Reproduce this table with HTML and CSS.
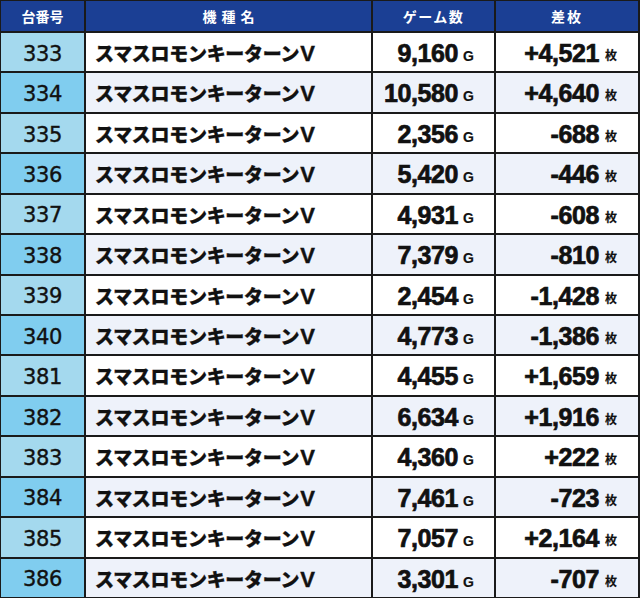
FILE: index.html
```html
<!DOCTYPE html>
<html lang="ja">
<head>
<meta charset="utf-8">
<title>台番号データ</title>
<link rel="stylesheet" href="styles.css">
</head>
<body>
<div class="board">
  <div class="row head">
    <div class="cell h1">台番号</div>
    <div class="cell h2">機種名</div>
    <div class="cell h3">ゲーム数</div>
    <div class="cell h4">差枚</div>
  </div>
  <div class="row odd"><div class="cell no">333</div><div class="cell name">スマスロモンキーターン<span class="v">V</span></div><div class="cell num">9,160<span class="u">G</span></div><div class="cell num diff">+4,521<span class="u2">枚</span></div></div>
  <div class="row even"><div class="cell no">334</div><div class="cell name">スマスロモンキーターン<span class="v">V</span></div><div class="cell num">10,580<span class="u">G</span></div><div class="cell num diff">+4,640<span class="u2">枚</span></div></div>
  <div class="row odd"><div class="cell no">335</div><div class="cell name">スマスロモンキーターン<span class="v">V</span></div><div class="cell num">2,356<span class="u">G</span></div><div class="cell num diff">-688<span class="u2">枚</span></div></div>
  <div class="row even"><div class="cell no">336</div><div class="cell name">スマスロモンキーターン<span class="v">V</span></div><div class="cell num">5,420<span class="u">G</span></div><div class="cell num diff">-446<span class="u2">枚</span></div></div>
  <div class="row odd"><div class="cell no">337</div><div class="cell name">スマスロモンキーターン<span class="v">V</span></div><div class="cell num">4,931<span class="u">G</span></div><div class="cell num diff">-608<span class="u2">枚</span></div></div>
  <div class="row even"><div class="cell no">338</div><div class="cell name">スマスロモンキーターン<span class="v">V</span></div><div class="cell num">7,379<span class="u">G</span></div><div class="cell num diff">-810<span class="u2">枚</span></div></div>
  <div class="row odd"><div class="cell no">339</div><div class="cell name">スマスロモンキーターン<span class="v">V</span></div><div class="cell num">2,454<span class="u">G</span></div><div class="cell num diff">-1,428<span class="u2">枚</span></div></div>
  <div class="row even"><div class="cell no">340</div><div class="cell name">スマスロモンキーターン<span class="v">V</span></div><div class="cell num">4,773<span class="u">G</span></div><div class="cell num diff">-1,386<span class="u2">枚</span></div></div>
  <div class="row odd"><div class="cell no">381</div><div class="cell name">スマスロモンキーターン<span class="v">V</span></div><div class="cell num">4,455<span class="u">G</span></div><div class="cell num diff">+1,659<span class="u2">枚</span></div></div>
  <div class="row even"><div class="cell no">382</div><div class="cell name">スマスロモンキーターン<span class="v">V</span></div><div class="cell num">6,634<span class="u">G</span></div><div class="cell num diff">+1,916<span class="u2">枚</span></div></div>
  <div class="row odd"><div class="cell no">383</div><div class="cell name">スマスロモンキーターン<span class="v">V</span></div><div class="cell num">4,360<span class="u">G</span></div><div class="cell num diff">+222<span class="u2">枚</span></div></div>
  <div class="row even"><div class="cell no">384</div><div class="cell name">スマスロモンキーターン<span class="v">V</span></div><div class="cell num">7,461<span class="u">G</span></div><div class="cell num diff">-723<span class="u2">枚</span></div></div>
  <div class="row odd"><div class="cell no">385</div><div class="cell name">スマスロモンキーターン<span class="v">V</span></div><div class="cell num">7,057<span class="u">G</span></div><div class="cell num diff">+2,164<span class="u2">枚</span></div></div>
  <div class="row even"><div class="cell no">386</div><div class="cell name">スマスロモンキーターン<span class="v">V</span></div><div class="cell num">3,301<span class="u">G</span></div><div class="cell num diff">-707<span class="u2">枚</span></div></div>
</div>
</body>
</html>
```

FILE: styles.css
```css
html, body {
  margin: 0;
  padding: 0;
  background: #ffffff;
}

.board {
  box-sizing: border-box;
  width: 640px;
  height: 598px;
  display: grid;
  grid-template-columns: 83px 285px 121px 1fr;
  grid-template-rows: 30px repeat(14, 1fr);
  gap: 2px;
  padding: 1px 2px 1px 1px;
  background: #1a1a1a;
  font-family: "Liberation Sans", "Noto Sans CJK JP", sans-serif;
  color: #111111;
}

.row {
  display: contents;
}

.cell {
  display: flex;
  align-items: center;
  min-width: 0;
  overflow: hidden;
  white-space: nowrap;
}

.head .cell {
  background: #1b3f94;
  color: #ffffff;
  justify-content: center;
  font-family: "Noto Sans CJK JP", sans-serif;
  font-weight: 700;
  font-size: 14px;
}

.h1 { letter-spacing: 0; }
.h2 { letter-spacing: 5px; padding-left: 5px; }
.h3 { letter-spacing: 1.5px; }
.h4 { letter-spacing: 2px; }

.odd .cell { background: #ffffff; }
.even .cell { background: #eef2fa; }
.odd .no { background: #a4d9ee; }
.even .no { background: #80cdef; }

.no {
  justify-content: center;
  font-family: "DejaVu Sans", sans-serif;
  font-size: 21px;
  font-weight: 400;
  letter-spacing: -0.3px;
  -webkit-text-stroke: 0.4px #111111;
  padding-top: 3px;
}

.name {
  padding-left: 9px;
  align-items: baseline;
  padding-top: 6px;
  font-family: "Noto Sans CJK JP", sans-serif;
  font-weight: 900;
  font-size: 19px;
  letter-spacing: -0.3px;
  -webkit-text-stroke: 0.3px #111111;
}

.v {
  font-family: "Liberation Sans", sans-serif;
  font-weight: 700;
  font-size: 22px;
  margin-left: 1px;
  -webkit-text-stroke: 0.4px #111111;
}

.num {
  justify-content: flex-end;
  align-items: baseline;
  padding-top: 6px;
  padding-right: 20px;
  font-size: 25px;
  font-weight: 700;
  letter-spacing: -0.4px;
  -webkit-text-stroke: 0.7px #111111;
}

.u {
  font-size: 14px;
  margin-left: 5px;
  letter-spacing: 0;
  -webkit-text-stroke: 0.2px #111111;
  position: relative;
  top: -1px;
}

.diff {
  padding-right: 21px;
}

.u2 {
  font-family: "Noto Sans CJK JP", sans-serif;
  font-size: 12px;
  font-weight: 700;
  margin-left: 6px;
  letter-spacing: 0;
  -webkit-text-stroke: 0.2px #111111;
  position: relative;
  top: -2px;
}
```
